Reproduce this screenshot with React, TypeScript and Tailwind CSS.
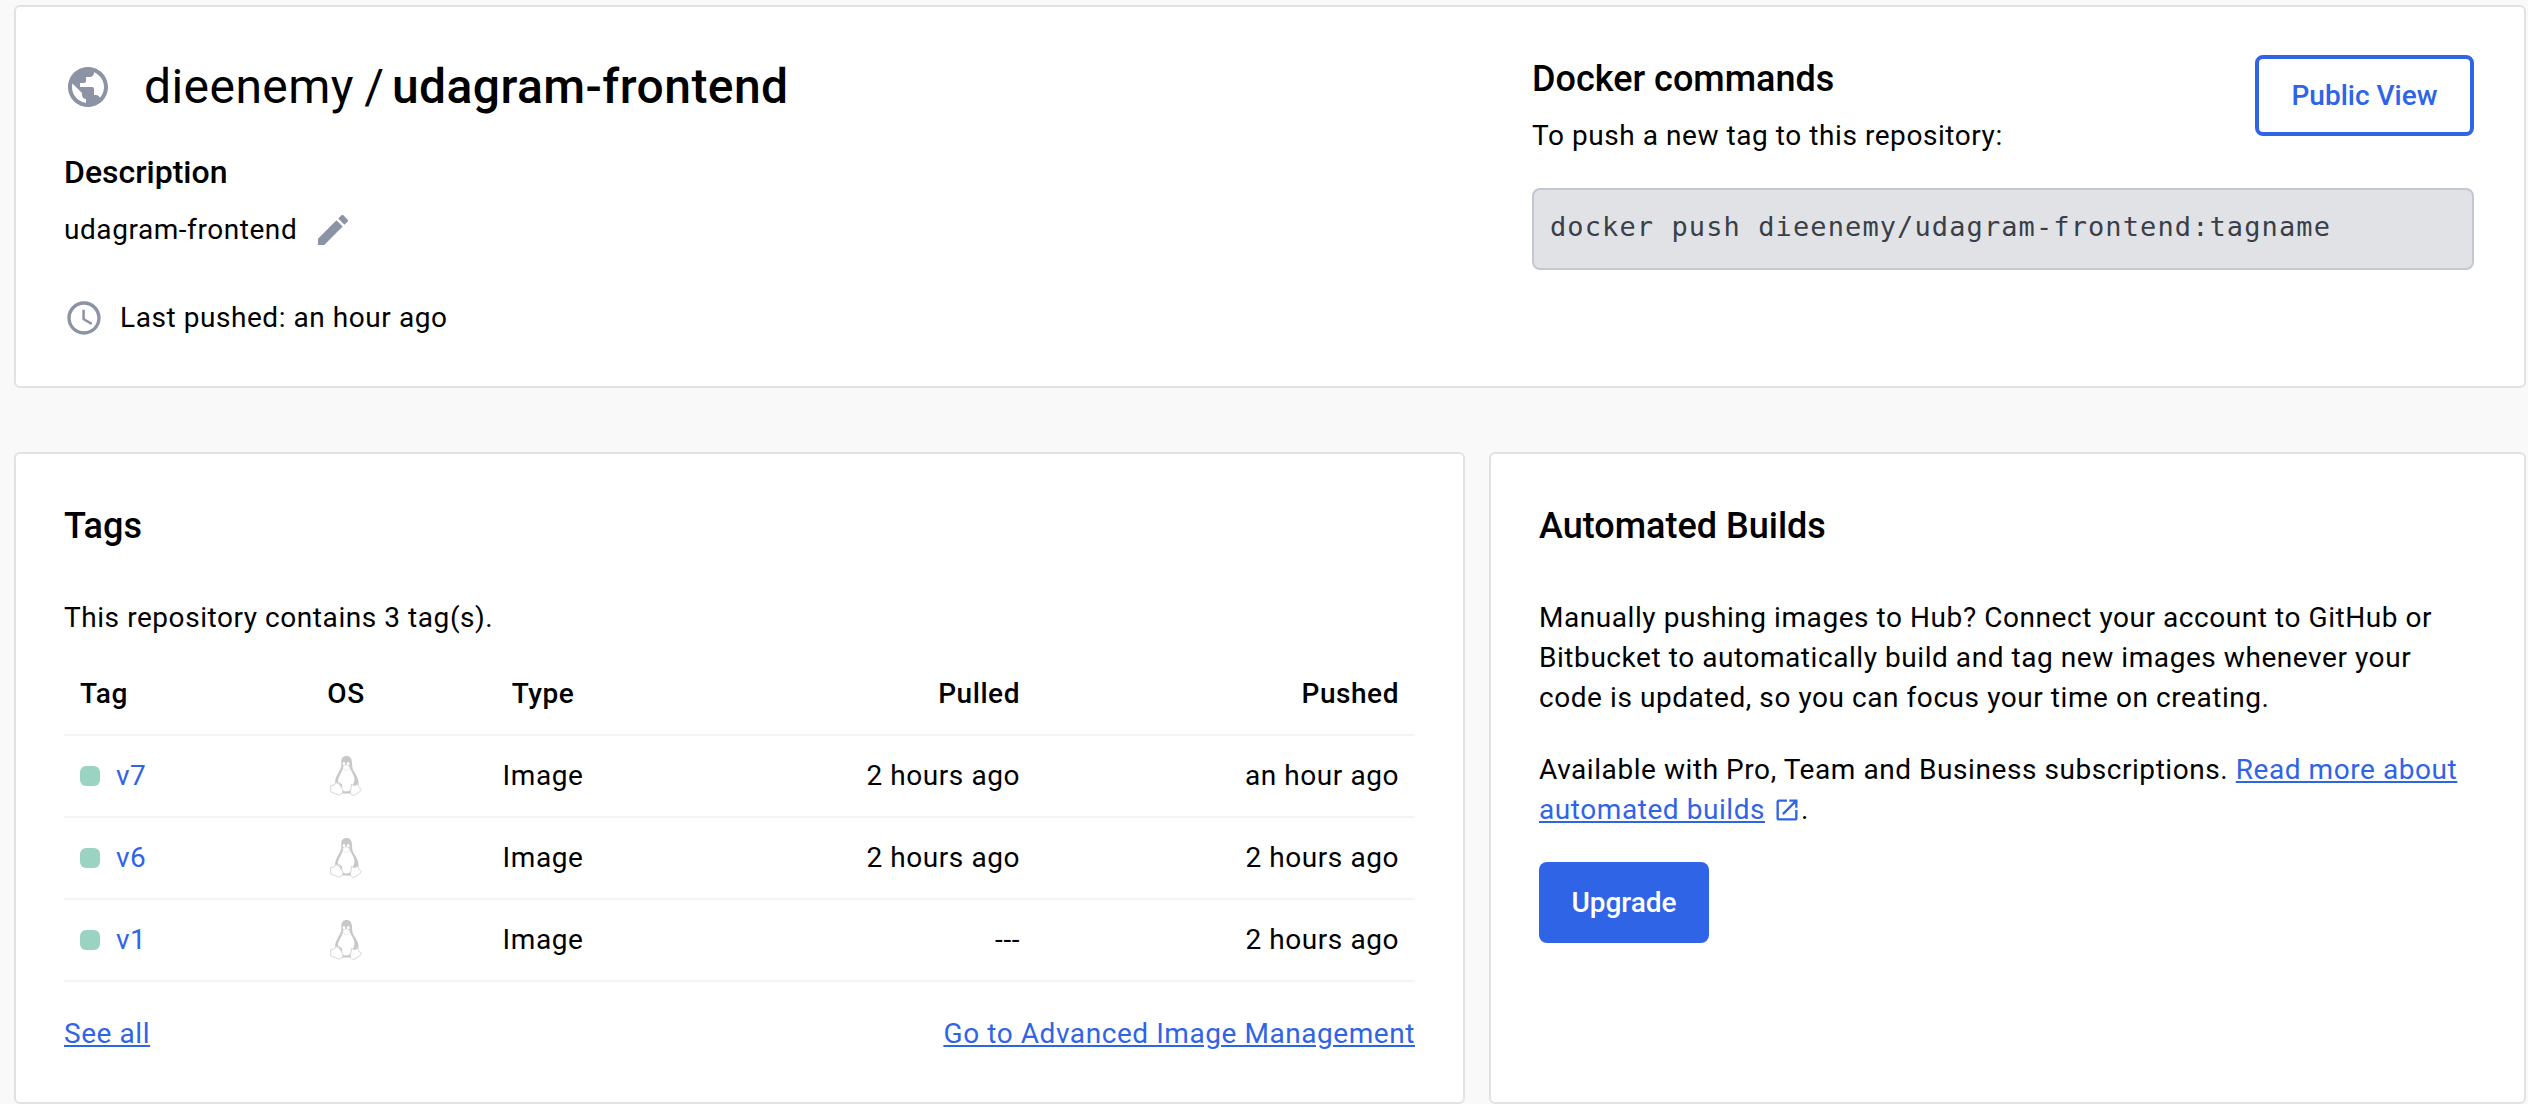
import React from "react";

const PATHS = {
  globe:
    "M12 2C6.48 2 2 6.48 2 12s4.48 10 10 10 10-4.48 10-10S17.52 2 12 2zm-1 17.93c-3.95-.49-7-3.85-7-7.93 0-.62.08-1.21.21-1.79L9 15v1c0 1.1.9 2 2 2v1.93zm6.9-2.54c-.26-.81-1-1.39-1.9-1.39h-1v-3c0-.55-.45-1-1-1H8v-2h2c.55 0 1-.45 1-1V7h2c1.1 0 2-.9 2-2v-.41c2.93 1.19 5 4.06 5 7.41 0 2.08-.8 3.97-2.1 5.39z",
  edit: "M3 17.25V21h3.75L17.81 9.94l-3.75-3.75L3 17.25zM20.71 7.04c.39-.39.39-1.02 0-1.41l-2.34-2.34c-.39-.39-1.02-.39-1.41 0l-1.83 1.83 3.75 3.75 1.83-1.83z",
  clock:
    "M11.99 2C6.47 2 2 6.48 2 12s4.47 10 9.99 10C17.52 22 22 17.52 22 12S17.52 2 11.99 2zM12 20c-4.42 0-8-3.58-8-8s3.58-8 8-8 8 3.58 8 8-3.58 8-8 8zm.5-13H11v6l5.25 3.15.75-1.23-4.5-2.67z",
  external:
    "M19 19H5V5h7V3H5c-1.11 0-2 .9-2 2v14c0 1.1.89 2 2 2h14c1.1 0 2-.9 2-2v-7h-2v7zM14 3v2h3.59l-9.83 9.83 1.41 1.41L19 6.41V10h2V3h-7z",
};

function Icon({ name, className }: { name: keyof typeof PATHS; className: string }) {
  return (
    <svg viewBox="0 0 24 24" fill="currentColor" className={className}>
      <path d={PATHS[name]} />
    </svg>
  );
}

function Penguin() {
  return (
    <svg viewBox="0 0 32 40" className="mx-auto block h-10 w-8" fill="none">
      <path
        d="M16.500 0c-3.800 0-5.300 2.600-5.200 6 .1 3 .3 5.500-1.600 8.500C7.500 18.200 5.500 21.500 5 26l-.2 3 6.200 8.500h10.500L28.500 28.500c.6-4.500-1.800-8.800-4.200-12.300-2.300-3.300-2.100-6.500-2.300-10C21.800 2.600 20.200 0 16.500 0z"
        fill="#c8c8c8"
      />
      <path d="M13 12c-.5 3.500-3.700 7-4.900 11.500-.6 3 0 5 2.500 8 1.800 2.300 2.600 4 5.400 4s5-1.500 6-4.500c1.300-3 3-5.500 2.200-9.500-.9-4.200-3.500-6.500-4.400-10z" fill="#fff" />
      <ellipse cx="14" cy="7.800" rx="1.300" ry="1.700" fill="#fff" />
      <ellipse cx="18.200" cy="7.800" rx="1.500" ry="1.800" fill="#fff" />
      <path d="M12.800 10.300l3.200-1.600 3.600 1.500-.4 3-3.200 1.600-2.800-1.600z" fill="#fff" stroke="#d6d6d6" strokeWidth=".7" strokeDasharray="1.500 1" />
      <path d="M6 26.500l3 1.500 3.500 5.500c1.300 2.500-.6 5-3.200 5.500l-8.500-3-.2-6.500 3.500-.5z" fill="#fff" stroke="#d6d6d6" />
      <path d="M21.500 28l1.500 1.500h3l1.500-2 1 3.200 3 2.800-2 2.500-5.200 3.200c-2.500.6-4-1-3.800-3.200z" fill="#fff" stroke="#d6d6d6" />
      <path d="M7.500 25l5 7-.5-3.500z" fill="#c0c0c0" />
    </svg>
  );
}

const ROWS = [
  { tag: "v7", pulled: "2 hours ago", pushed: "an hour ago" },
  { tag: "v6", pulled: "2 hours ago", pushed: "2 hours ago" },
  { tag: "v1", pulled: "---", pushed: "2 hours ago" },
];

const CARD = "rounded-[6px] border-2 border-[#e1e2e6] bg-white";

export default function App() {
  return (
    <div className="h-[1104px] w-[2528px] overflow-hidden bg-[#f9f9fa] pt-[5px] pl-[14px] font-['Roboto',sans-serif] text-[28px] leading-[40px] tracking-[0.56px] text-black">
      <section className={`${CARD} flex h-[383px] w-[2512px] justify-between pr-[50px] pl-[48px]`}>
        <div>
          <div className="mt-[50px] flex h-[60px] items-center">
            <Icon name="globe" className="h-12 w-12 text-[#8b93a5]" />
            <h1 className="ml-[32px] text-[48px] leading-[60px] tracking-[0.44px]">
              dieenemy <span className="-ml-[2px]">/</span> <span className="-ml-[5px] font-medium">udagram-frontend</span>
            </h1>
          </div>
          <h2 className="mt-[35px] text-[32px] leading-[40px] font-medium tracking-normal">Description</h2>
          <div className="mt-[18px] flex h-[40px] items-center">
            <span>udagram-frontend</span>
            <Icon name="edit" className="ml-4 h-10 w-10 text-[#8b93a5]" />
          </div>
          <div className="mt-[48px] flex h-[40px] items-center">
            <Icon name="clock" className="h-10 w-10 text-[#8b93a5]" />
            <span className="ml-4">Last pushed: an hour ago</span>
          </div>
        </div>
        <div className="w-[942px] pt-[48px]">
          <div className="flex justify-between">
            <div>
              <h2 className="text-[36px] leading-[48px] font-medium tracking-normal">Docker commands</h2>
              <p className="mt-[13px]">To push a new tag to this repository:</p>
            </div>
            <button className="h-[81px] w-[219px] rounded-[8px] border-4 border-[#3064e6] font-medium tracking-normal text-[#3064e6]">
              Public View
            </button>
          </div>
          <div className="mt-[32px] flex h-[82px] items-center rounded-[8px] border-2 border-[#c3c7cf] bg-[#e1e2e6] pb-[4px] pl-[16px] font-['DejaVu_Sans_Mono',monospace] text-[27px] tracking-[1.1px] text-[#393f49]">
            docker push dieenemy/udagram-frontend:tagname
          </div>
        </div>
      </section>

      <div className="mt-[64px] flex gap-[24px]">
        <section className={`${CARD} h-[652px] w-[1451px] px-[48px]`}>
          <h2 className="mt-[48px] text-[36px] leading-[48px] font-medium tracking-normal">Tags</h2>
          <p className="mt-[48px]">This repository contains 3 tag(s).</p>
          <table className="mt-[15px] w-full table-fixed border-collapse">
            <colgroup>
              <col className="w-[221px]" />
              <col className="w-[122px]" />
              <col className="w-[272px]" />
              <col className="w-[357px]" />
              <col />
            </colgroup>
            <thead>
              <tr className="h-[82px] border-b-2 border-[#f3f4f6] font-medium">
                <td className="pl-4">Tag</td>
                <td className="text-center">OS</td>
                <td className="text-center">Type</td>
                <td className="pr-4 text-right">Pulled</td>
                <td className="pr-4 text-right">Pushed</td>
              </tr>
            </thead>
            <tbody>
              {ROWS.map((r) => (
                <tr key={r.tag} className="h-[82px] border-b-2 border-[#f3f4f6]">
                  <td className="pl-4">
                    <div className="flex items-center gap-4">
                      <span className="h-5 w-5 rounded-[6px] bg-[#9ad3c1]" />
                      <a className="text-[#3064e6]">{r.tag}</a>
                    </div>
                  </td>
                  <td><Penguin /></td>
                  <td className="text-center">Image</td>
                  <td className="pr-4 text-right">{r.pulled}</td>
                  <td className="pr-4 text-right">{r.pushed}</td>
                </tr>
              ))}
            </tbody>
          </table>
          <div className="mt-[32px] flex justify-between text-[#3064e6] underline">
            <a>See all</a>
            <a>Go to Advanced Image Management</a>
          </div>
        </section>

        <section className={`${CARD} h-[652px] w-[1037px] px-[48px]`}>
          <h2 className="mt-[48px] text-[36px] leading-[48px] font-medium tracking-normal">Automated Builds</h2>
          <p className="mt-[48px] whitespace-nowrap">
            Manually pushing images to Hub? Connect your account to GitHub or
            <br />
            Bitbucket to automatically build and tag new images whenever your
            <br />
            code is updated, so you can focus your time on creating.
          </p>
          <p className="mt-[32px] whitespace-nowrap">
            Available with Pro, Team and Business subscriptions.{" "}
            <a className="text-[#3064e6] underline">Read more about</a>
            <br />
            <a className="text-[#3064e6] underline">automated builds</a>
            <Icon name="external" className="ml-2 inline-block h-7 w-7 align-[-5px] text-[#3064e6]" />.
          </p>
          <button className="mt-[32px] h-[81px] w-[170px] rounded-[8px] bg-[#3064e6] font-medium tracking-normal text-white">
            Upgrade
          </button>
        </section>
      </div>
    </div>
  );
}
